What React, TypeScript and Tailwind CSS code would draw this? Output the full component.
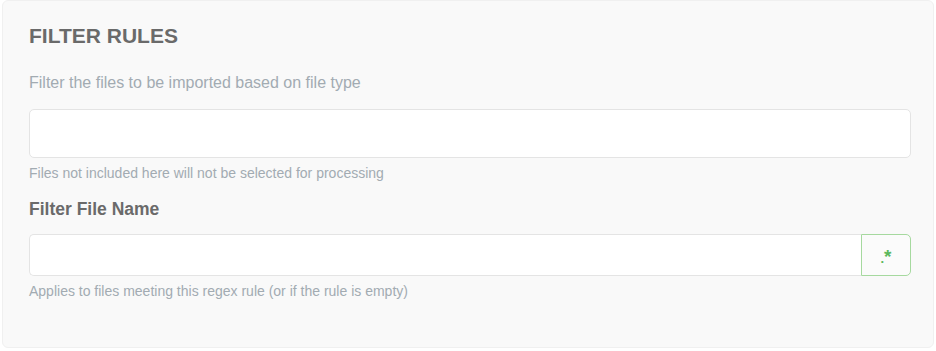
export default function App() {
  return (
    <div className="w-[936px] h-[351px] bg-white" style={{ fontFamily: '"Liberation Sans", Arial, sans-serif' }}>
      <div className="ml-[2px] w-[932px] h-[348px] rounded-md bg-[#f9f9f9] border border-[#f0f0f0] px-[26px] pt-[23px]">
        <h2 className="text-[21px] leading-[24px] font-bold text-[#6a6a6a]">FILTER RULES</h2>
        <p className="mt-[25px] text-[16px] leading-[20px] text-[#a2abb2]">
          Filter the files to be imported based on file type
        </p>
        <input
          type="text"
          className="mt-[16px] block w-[882px] h-[49px] bg-white border border-[#e4e4e4] rounded-[5px] px-3 outline-none"
        />
        <p className="mt-[6px] text-[14px] leading-[18px] text-[#a2abb2]">
          Files not included here will not be selected for processing
        </p>
        <label className="mt-[16px] block text-[17.5px] leading-[22px] font-bold text-[#6a6a6a]">
          Filter File Name
        </label>
        <div className="mt-[14px] flex w-[882px] h-[42px]">
          <input
            type="text"
            className="flex-1 h-full bg-white border border-r-0 border-[#e4e4e4] rounded-l-[5px] px-3 outline-none"
          />
          <button className="w-[50px] h-full flex items-center justify-center border border-[#a6d99f] rounded-r-[5px] bg-[#fbfbfb] text-[#5cb85c] font-bold">
            <span className="text-[13px] leading-none relative top-[3px]">.</span>
            <span className="text-[19px] leading-none relative top-[1px]">*</span>
          </button>
        </div>
        <p className="mt-[6px] text-[14px] leading-[18px] text-[#a2abb2]">
          Applies to files meeting this regex rule (or if the rule is empty)
        </p>
      </div>
    </div>
  );
}
